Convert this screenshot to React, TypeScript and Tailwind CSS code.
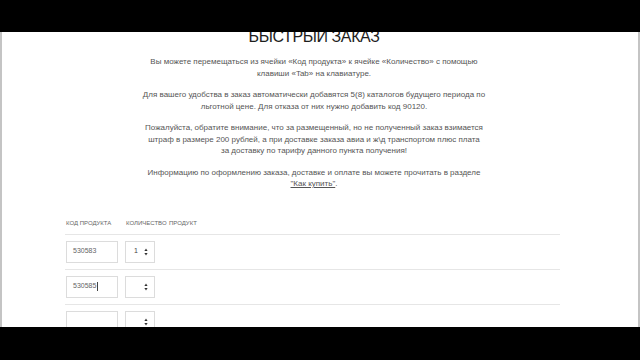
import React from "react";

const Spinner = () => (
    <svg width="4" height="8" viewBox="0 0 4 8" className="shrink-0">
        <path d="M2 0.5 L3.6 3 L0.4 3 Z" fill="#333" />
        <path d="M2 7.5 L3.6 5 L0.4 5 Z" fill="#333" />
    </svg>
);

const rows = [
    { code: "530583", qty: "1", caret: false },
    { code: "530585", qty: "", caret: true },
    { code: "", qty: "", caret: false },
];

const App = () => {
    return (
        <div className="w-[640px] h-[360px] bg-black flex flex-col" style={{ fontFamily: '"Liberation Sans", Arial, sans-serif' }}>
            <div className="h-[32px] shrink-0" />
            <div className="h-[295px] shrink-0 bg-white border-x-2 border-[#c4c4c4] overflow-hidden flex flex-col">
                <div className="flex flex-col items-center text-center pr-[12px]">
                    <h1 className="-mt-[3px] text-[16px] leading-[16px] font-light text-[#1e1e1e] tracking-[-0.4px]">
                        БЫСТРЫЙ ЗАКАЗ
                    </h1>
                    <div className="mt-[11px] w-[346px] text-[8px] leading-[11.5px] text-[#555] flex flex-col gap-[10px]">
                        <p>Вы можете перемещаться из ячейки «Код продукта» к ячейке «Количество» с помощью клавиши «Tab» на клавиатуре.</p>
                        <p>Для вашего удобства в заказ автоматически добавятся 5(8) каталогов будущего периода по льготной цене. Для отказа от них нужно добавить код 90120.</p>
                        <p>
                            Пожалуйста, обратите внимание, что за размещенный, но не полученный заказ взимается штраф в размере 200 рублей, а при доставке заказа авиа и ж\д транспортом плюс плата
                            <br />
                            за доставку по тарифу данного пункта получения!
                        </p>
                        <p>
                            Информацию по оформлению заказа, доставке и оплате вы можете прочитать в разделе{" "}
                            <span className="underline">"Как купить"</span>.
                        </p>
                    </div>
                </div>

                <div className="mt-[24px] ml-[63px] w-[495px]">
                    <div className="h-[21px] border-b border-[#e6e6e6] flex items-center pl-[1px] text-[6px] uppercase text-[#666]">
                        <span className="w-[60px]">Код продукта</span>
                        <span className="w-[43px]">Количество</span>
                        <span>Продукт</span>
                    </div>
                    {rows.map((r, i) => (
                        <div key={i} className="h-[35px] border-b border-[#e6e6e6] flex items-center pl-[1px] gap-[7px]">
                            <div className="w-[52px] h-[22px] border border-[#dcdcdc] flex items-center pl-[6px] text-[7px] text-[#666]">
                                {r.code}
                                {r.caret && <span className="ml-[1px] w-px h-[9px] bg-[#444]" />}
                            </div>
                            <div className="w-[30px] h-[22px] border border-[#dcdcdc] flex items-center justify-between pl-[8px] pr-[6px] text-[7px] text-[#444]">
                                <span>{r.qty}</span>
                                <Spinner />
                            </div>
                        </div>
                    ))}
                </div>
            </div>
            <div className="flex-1" />
        </div>
    );
};

export default App;
